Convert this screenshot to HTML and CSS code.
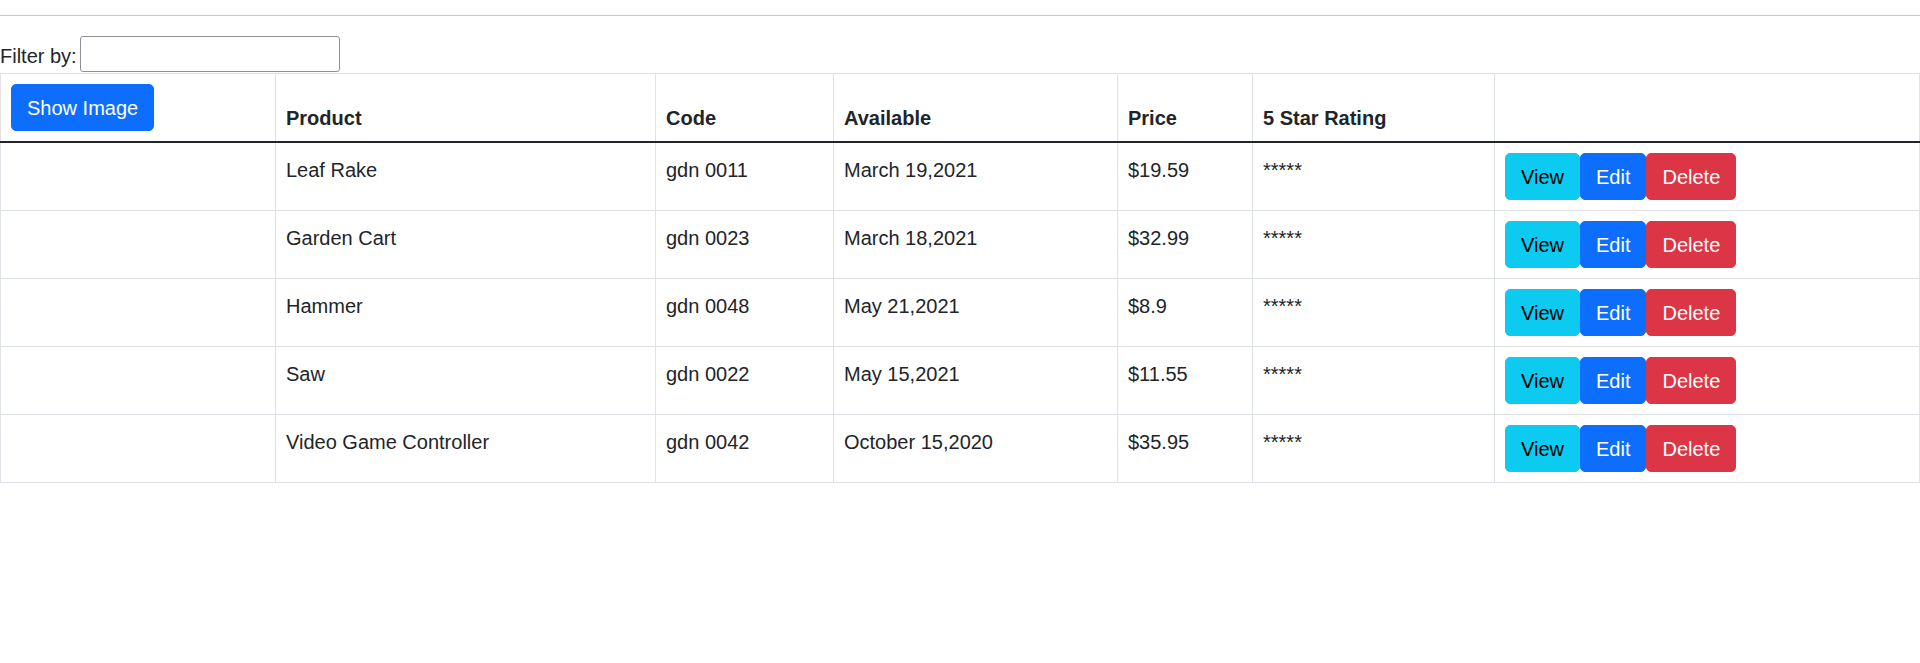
FILE: index.html
```html
<!DOCTYPE html>
<html lang="en">
<head>
<meta charset="utf-8">
<title>Product List</title>
<link rel="stylesheet" href="styles.css">
</head>
<body>
<hr class="rule">
<div class="filter">
  <label class="filter-label" for="filter">Filter by:</label>
  <input class="filter-input" id="filter" type="text">
</div>
<table class="table">
  <colgroup>
    <col class="c-img"><col class="c-prod"><col class="c-code"><col class="c-avail"><col class="c-price"><col class="c-rate"><col>
  </colgroup>
  <thead>
    <tr>
      <th class="cell-btn"><button class="btn btn-primary">Show Image</button></th>
      <th>Product</th>
      <th>Code</th>
      <th>Available</th>
      <th>Price</th>
      <th>5 Star Rating</th>
      <th></th>
    </tr>
  </thead>
  <tbody>
    <tr>
      <td></td><td>Leaf Rake</td><td>gdn 0011</td><td>March 19,2021</td><td>$19.59</td><td>*****</td>
      <td class="cell-btn"><button class="btn btn-info">View</button><button class="btn btn-primary">Edit</button><button class="btn btn-danger">Delete</button></td>
    </tr>
    <tr>
      <td></td><td>Garden Cart</td><td>gdn 0023</td><td>March 18,2021</td><td>$32.99</td><td>*****</td>
      <td class="cell-btn"><button class="btn btn-info">View</button><button class="btn btn-primary">Edit</button><button class="btn btn-danger">Delete</button></td>
    </tr>
    <tr>
      <td></td><td>Hammer</td><td>gdn 0048</td><td>May 21,2021</td><td>$8.9</td><td>*****</td>
      <td class="cell-btn"><button class="btn btn-info">View</button><button class="btn btn-primary">Edit</button><button class="btn btn-danger">Delete</button></td>
    </tr>
    <tr>
      <td></td><td>Saw</td><td>gdn 0022</td><td>May 15,2021</td><td>$11.55</td><td>*****</td>
      <td class="cell-btn"><button class="btn btn-info">View</button><button class="btn btn-primary">Edit</button><button class="btn btn-danger">Delete</button></td>
    </tr>
    <tr>
      <td></td><td>Video Game Controller</td><td>gdn 0042</td><td>October 15,2020</td><td>$35.95</td><td>*****</td>
      <td class="cell-btn"><button class="btn btn-info">View</button><button class="btn btn-primary">Edit</button><button class="btn btn-danger">Delete</button></td>
    </tr>
  </tbody>
</table>
</body>
</html>
```

FILE: styles.css
```css
html, body {
  margin: 0;
  padding: 0;
  background: #fff;
}
body {
  font-family: "Liberation Sans", Arial, sans-serif;
  font-size: 20px;
  line-height: 30px;
  color: #212529;
}
.rule {
  margin: 15px 0 20px;
  border: 0;
  border-top: 1px solid #c8c9ca;
  height: 0;
}
.filter {
  display: flex;
  align-items: center;
  gap: 3px;
  height: 37px;
}
.filter-label {
  line-height: 30px;
  padding-top: 2px;
}
.filter-input {
  box-sizing: border-box;
  width: 260px;
  height: 36px;
  margin: 0 0 1px 0;
  border: 1px solid #8f8f9d;
  border-radius: 3px;
  font: inherit;
  padding: 2px 4px;
}
.table {
  width: 100%;
  border-collapse: collapse;
  table-layout: fixed;
  border: 1px solid #dee2e6;
}
.c-img { width: 275px; }
.c-prod { width: 380px; }
.c-code { width: 178px; }
.c-avail { width: 284px; }
.c-price { width: 135px; }
.c-rate { width: 242px; }
.table th,
.table td {
  border: 1px solid #dee2e6;
  padding: 11.5px 10px 8.5px;
  text-align: left;
}
.table th.cell-btn,
.table td.cell-btn {
  padding: 10px;
}
.table th {
  vertical-align: bottom;
  font-weight: bold;
}
.table thead th {
  border-bottom: 2px solid #212529;
}
.table td {
  vertical-align: top;
}
.btn {
  display: inline-block;
  box-sizing: border-box;
  font-family: inherit;
  font-size: 20px;
  line-height: 30px;
  padding: 7.5px 15px;
  border: 1.25px solid transparent;
  border-radius: 5px;
  cursor: pointer;
  margin: 0;
  vertical-align: baseline;
}
.btn-primary {
  background: #0d6efd;
  border-color: #0d6efd;
  color: #fff;
}
.btn-info {
  background: #0dcaf0;
  border-color: #0dcaf0;
  color: #000;
}
.btn-danger {
  background: #dc3545;
  border-color: #dc3545;
  color: #fff;
}
```
